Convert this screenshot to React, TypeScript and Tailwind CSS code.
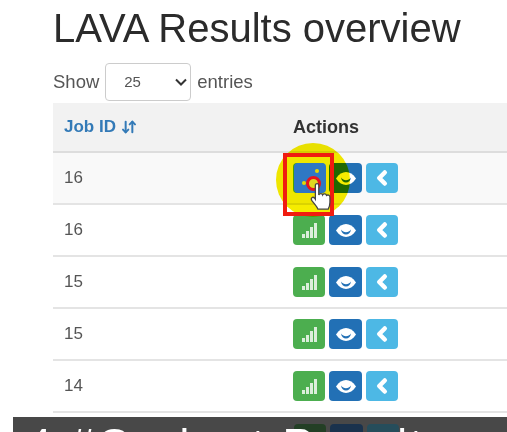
import React from 'react';
import { ArrowDownUp, ChevronLeft } from 'lucide-react';

function Bars() {
  return (
    <svg width="15" height="15" viewBox="0 0 15 15" fill="#ffffff" opacity={0.8}>
      <rect x="0" y="11" width="3" height="4" />
      <rect x="4" y="8" width="3" height="7" />
      <rect x="8" y="4" width="3" height="11" />
      <rect x="12" y="0" width="3" height="15" />
    </svg>
  );
}

function Eye() {
  return (
    <svg width="22" height="15" viewBox="0 0 22 15">
      <path d="M1 7.500C4 3 7.500 1 11 1s7 2 10 6.500c-3 4.500-6.500 6.500-10 6.500S4 12 1 7.500z" fill="#ffffff" />
      <path d="M6 6.500c.500 3.500 2.500 5 5 5s4.500-1.500 5-5c-1.500 2-3 2.700-5 2.700S7.500 8.500 6 6.500z" fill="#2270b5" />
    </svg>
  );
}

function ActionButtons() {
  return (
    <div className="flex gap-1">
      <span className="w-[32px] h-[30px] rounded-[4px] bg-[#4cae4f] flex items-center justify-center">
        <Bars />
      </span>
      <span className="w-[33px] h-[30px] rounded-[4px] bg-[#2270b5] flex items-center justify-center">
        <Eye />
      </span>
      <span className="w-[32px] h-[30px] rounded-[4px] bg-[#4db8e5] flex items-center justify-center text-white">
        <ChevronLeft size={22} strokeWidth={5} />
      </span>
    </div>
  );
}

const rows = ['16', '16', '15', '15', '14'];

export default function App() {
  return (
    <div className="relative w-[507px] h-[432px] overflow-hidden bg-white font-['Liberation_Sans',sans-serif] text-[#444]">
      <div className="blur-[0.5px]">
        <div className="pl-[53px] pt-[5px]">
          <h1 className="text-[40px] leading-[46px] text-[#2b2b2b] whitespace-nowrap">LAVA Results overview</h1>
          <div className="flex items-center mt-[11px] text-[18.500px] h-[40px]">
            <span className="text-[#555]">Show</span>
            <div className="ml-[6px] w-[86px] h-[38px] border border-[#ccc] rounded-[4px] flex items-center pl-[18px] pr-[2px] justify-between text-[15px] text-[#555]">
              <span>25</span>
              <svg width="14" height="9" viewBox="0 0 14 9" fill="none" stroke="#333" strokeWidth="2">
                <path d="M2 1.500l5 5 5-5" />
              </svg>
            </div>
            <span className="ml-[6px] text-[#555]">entries</span>
          </div>

          <div className="mt-[1px]">
            <div className="flex items-center h-[50px] bg-[#f2f2f2] border-b-2 border-[#ddd] pl-[11px] font-bold text-[17px]">
              <div className="w-[229px] text-[#337ab7] flex items-center gap-[5px]">
                Job ID
                <ArrowDownUp size={16} strokeWidth={3} />
              </div>
              <div className="text-[#333] text-[18px]">Actions</div>
            </div>
            {rows.map((id, i) => (
              <div
                key={i}
                className={`flex items-center h-[52px] border-b-2 border-[#e4e4e4] pl-[11px] text-[17px] text-[#555] ${i === 0 ? 'bg-[#f9f9f9]' : 'bg-white'}`}
              >
                <div className="w-[229px]">{id}</div>
                <ActionButtons />
              </div>
            ))}
          </div>
        </div>

        {/* click highlight */}
        <div className="absolute left-[276px] top-[143px] w-[74px] h-[74px] rounded-full bg-[#f5ec00] mix-blend-multiply" />
        <div className="absolute left-[294px] top-[163px] w-[32px] h-[30px] rounded-[4px] bg-[#2f78c4]" />
        <div className="absolute left-[315px] top-[169px] w-[4px] h-[4px] rounded-full bg-[#e6d800]" />
        <div className="absolute left-[302px] top-[181px] w-[4px] h-[4px] rounded-full bg-[#e6d800]" />
        <div className="absolute left-[283px] top-[153px] w-[51px] h-[63px] border-[4px] border-[#f01c10]" />
        <div className="absolute left-[306px] top-[176px] w-[15px] h-[15px] rounded-full border-[3px] border-[#e8141c] bg-[#e0d820]" />
        <svg className="absolute left-[310px] top-[183px]" width="21" height="30" viewBox="0 0 24 35">
          <path
            d="M6 3c0-3 4-3 4 0v11c1-2 4-2 4.500 0 1-2 4-1.500 4.500.500 1.500-1 4-.500 4 2v6c0 4-1 6-2 8H9c-1-3-4-6-7-10-2-3 1-5 3-3l1 1.500z"
            fill="#ffffff"
            stroke="#444444"
            strokeWidth="1.500"
          />
        </svg>

        {/* caption bar */}
        <div className="absolute left-[13px] top-[417px] w-[494px] h-[15px] bg-[#484848] overflow-hidden">
          <div className="absolute left-[281px] top-[7px] flex gap-1 opacity-90">
            <span className="w-[32px] h-[30px] rounded-[4px] bg-[#1f3f22]" />
            <span className="w-[33px] h-[30px] rounded-[4px] bg-[#16304e]" />
            <span className="w-[32px] h-[30px] rounded-[4px] bg-[#234e5e]" />
          </div>
          <div className="absolute left-[14px] top-[6px] text-[44px] leading-[44px] text-white whitespace-nowrap tracking-[3px]">
            4 #Gerbert Result
          </div>
        </div>
      </div>
    </div>
  );
}
